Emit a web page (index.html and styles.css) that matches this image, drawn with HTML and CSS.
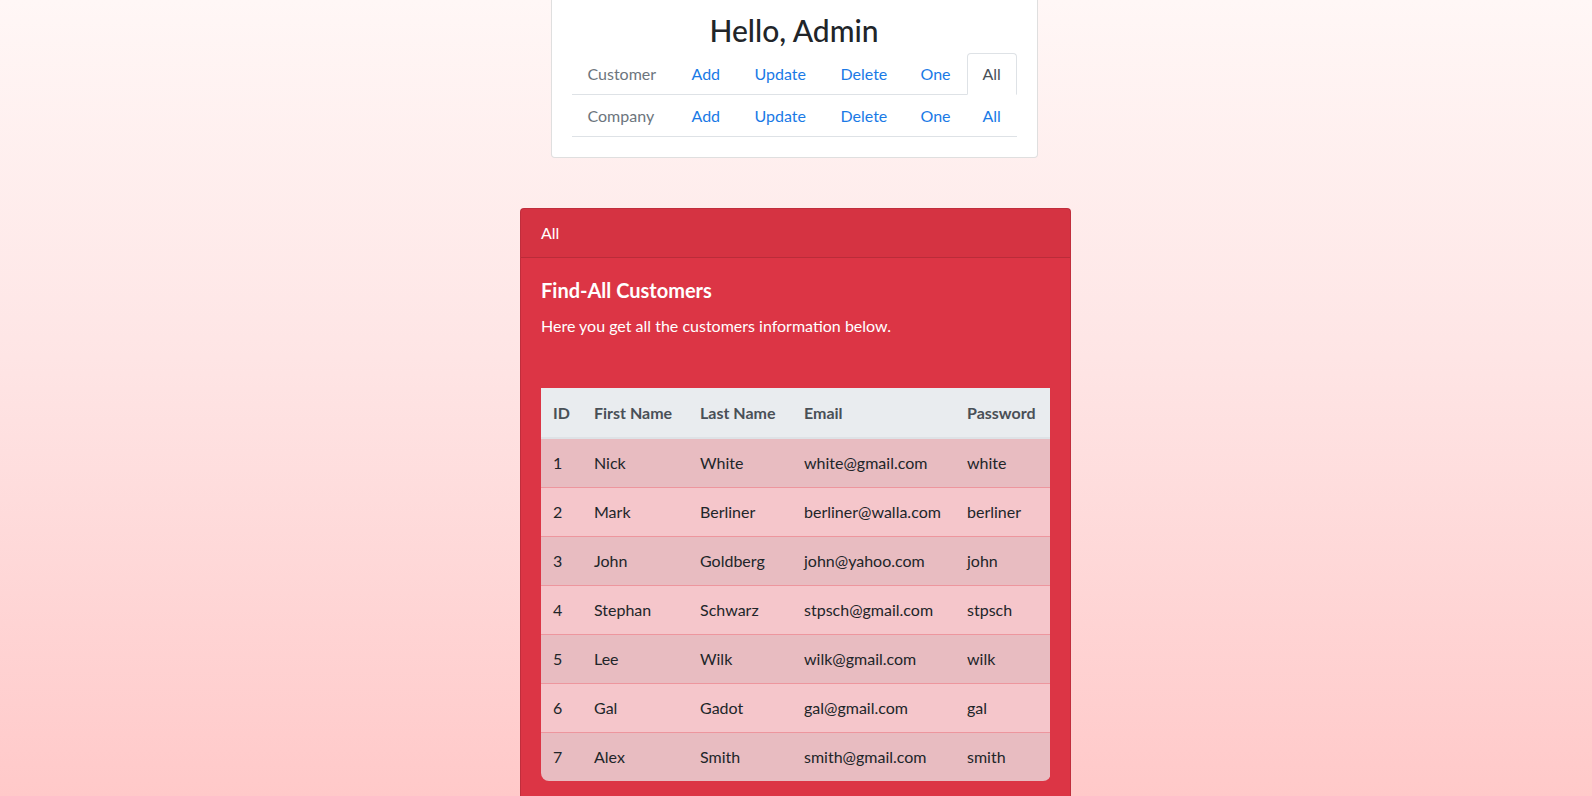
FILE: index.html
```html
<!DOCTYPE html>
<html lang="en">
<head>
<meta charset="utf-8">
<title>Admin</title>
<link rel="stylesheet" href="styles.css">
</head>
<body>
<div class="page">
  <div class="menu-card">
    <h2 class="hello">Hello, Admin</h2>
    <nav class="tabs">
      <span class="tab muted">Customer</span>
      <a class="tab link">Add</a>
      <a class="tab link">Update</a>
      <a class="tab link">Delete</a>
      <a class="tab link">One</a>
      <a class="tab active">All</a>
    </nav>
    <nav class="tabs">
      <span class="tab muted">Company</span>
      <a class="tab link">Add</a>
      <a class="tab link">Update</a>
      <a class="tab link">Delete</a>
      <a class="tab link">One</a>
      <a class="tab link">All</a>
    </nav>
  </div>

  <div class="red-card">
    <div class="red-header">All</div>
    <div class="red-body">
      <h5 class="title">Find-All Customers</h5>
      <p class="lead-text">Here you get all the customers information below.</p>
      <div class="table-wrap">
        <table class="customers">
          <colgroup>
            <col class="c-id"><col class="c-first"><col class="c-last"><col class="c-email"><col class="c-pass">
          </colgroup>
          <thead>
            <tr><th>ID</th><th>First Name</th><th>Last Name</th><th>Email</th><th>Password</th></tr>
          </thead>
          <tbody>
            <tr><td>1</td><td>Nick</td><td>White</td><td>white@gmail.com</td><td>white</td></tr>
            <tr><td>2</td><td>Mark</td><td>Berliner</td><td>berliner@walla.com</td><td>berliner</td></tr>
            <tr><td>3</td><td>John</td><td>Goldberg</td><td>john@yahoo.com</td><td>john</td></tr>
            <tr><td>4</td><td>Stephan</td><td>Schwarz</td><td>stpsch@gmail.com</td><td>stpsch</td></tr>
            <tr><td>5</td><td>Lee</td><td>Wilk</td><td>wilk@gmail.com</td><td>wilk</td></tr>
            <tr><td>6</td><td>Gal</td><td>Gadot</td><td>gal@gmail.com</td><td>gal</td></tr>
            <tr><td>7</td><td>Alex</td><td>Smith</td><td>smith@gmail.com</td><td>smith</td></tr>
          </tbody>
        </table>
      </div>
    </div>
  </div>
</div>
</body>
</html>
```

FILE: styles.css
```css
* { box-sizing: border-box; }

html, body {
  margin: 0;
  height: 100%;
}

body {
  font-family: "Lato", "Open Sans", sans-serif;
  font-size: 16px;
  line-height: 24px;
  color: #212529;
  background: linear-gradient(180deg, #fff7f6 0%, #fee5e5 45%, #ffc9c9 100%);
  overflow: hidden;
}

.page {
  display: flex;
  flex-direction: column;
  align-items: center;
}

.menu-card {
  width: 487px;
  margin-top: -10px;
  margin-right: 4px;
  background: #fff;
  border: 1px solid rgba(0, 0, 0, 0.125);
  border-radius: 4px;
  padding: 20px 20px 20px;
}

.hello {
  margin: 0 0 4px;
  font-size: 30px;
  line-height: 38px;
  font-weight: 500;
  text-align: center;
  color: #212529;
}

.tabs {
  display: grid;
  grid-template-columns: 104px 63px 86px 80px 62px 50px;
  border-bottom: 1px solid #dee2e6;
}

.tab {
  display: block;
  padding: 8px 15px;
  line-height: 24px;
  border: 1px solid transparent;
  border-top-left-radius: 4px;
  border-top-right-radius: 4px;
  margin-bottom: -1px;
  text-decoration: none;
  white-space: nowrap;
}

.muted { color: #6c757d; }
.link { color: #1a7ae6; }

.active {
  color: #495057;
  background: #fff;
  border-color: #dee2e6 #dee2e6 #fff;
}

.red-card {
  width: 551px;
  margin-top: 50px;
  margin-right: 1px;
  background: #dc3545;
  border: 1px solid rgba(0, 0, 0, 0.125);
  border-radius: 4px;
  color: #fff;
}

.red-header {
  padding: 12px 20px;
  background: rgba(0, 0, 0, 0.03);
  border-bottom: 1px solid rgba(0, 0, 0, 0.125);
  font-size: 16px;
}

.red-body {
  padding: 20px 19px 40px 20px;
}

.title {
  margin: 0 0 12px;
  font-size: 20px;
  line-height: 24px;
  font-weight: 700;
}

.lead-text {
  margin: 0;
  font-size: 16px;
  line-height: 24px;
}

.table-wrap {
  margin-top: 50px;
  border-radius: 0 0 8px 8px;
  overflow: hidden;
}

.customers {
  width: 509px;
  border-collapse: collapse;
  table-layout: fixed;
  color: #212529;
}

.c-id { width: 41px; }
.c-first { width: 106px; }
.c-last { width: 104px; }
.c-email { width: 163px; }
.c-pass { width: 95px; }

.customers th {
  background: #e9ecef;
  color: #495057;
  font-weight: 700;
  text-align: left;
  padding: 13px 11px 12px 12px;
  line-height: 24px;
  border-bottom: 2px solid #dee2e6;
  white-space: nowrap;
}

.customers td {
  padding: 12px 11px 12px 12px;
  line-height: 24px;
  border-top: 1px solid #ed969e;
  white-space: nowrap;
}

.customers tbody tr {
  background: #f5c6cb;
}

.customers tbody tr:nth-child(odd) {
  background: #e8bcc1;
}

.customers tbody tr:first-child td {
  border-top: 0;
}
```
